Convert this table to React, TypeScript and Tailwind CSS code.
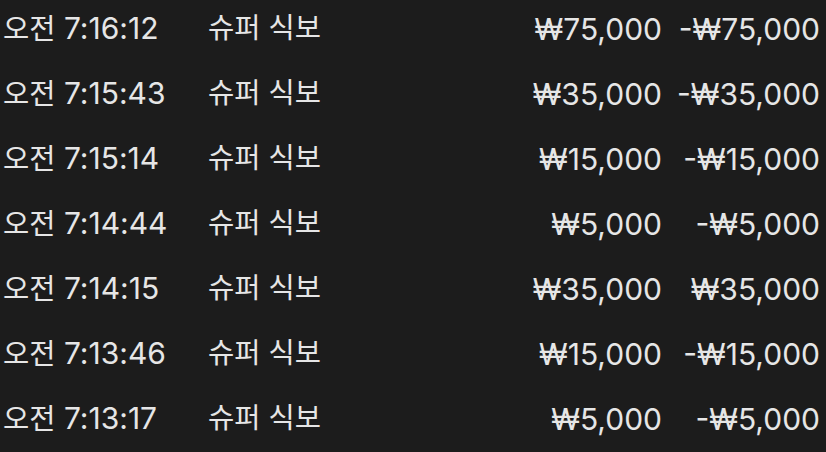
const rows = [
  ["7:16:12", "₩75,000", "-₩75,000"],
  ["7:15:43", "₩35,000", "-₩35,000"],
  ["7:15:14", "₩15,000", "-₩15,000"],
  ["7:14:44", "₩5,000", "-₩5,000"],
  ["7:14:15", "₩35,000", "₩35,000"],
  ["7:13:46", "₩15,000", "-₩15,000"],
  ["7:13:17", "₩5,000", "-₩5,000"],
];

export default function App() {
  return (
    <div
      className="w-[826px] h-[452px] overflow-hidden bg-[#1c1c1c] text-[#e6e6e6] text-[30px] leading-none"
      style={{ fontFamily: 'Inter, "Noto Sans CJK KR", sans-serif' }}
    >
      <div className="-mt-[4px] flex flex-col">
        {rows.map((r, i) => (
          <div key={i} className="h-[65px] flex items-center pl-[3px] pr-[6px]">
            <div className="w-[205px] whitespace-nowrap">
              <span className="text-[28.5px]">오전</span> {r[0]}
            </div>
            <div className="flex-1 text-[28.5px] whitespace-nowrap">슈퍼 식보</div>
            <div className="text-right whitespace-nowrap">{r[1]}</div>
            <div className="w-[158px] text-right whitespace-nowrap">{r[2]}</div>
          </div>
        ))}
      </div>
    </div>
  );
}
